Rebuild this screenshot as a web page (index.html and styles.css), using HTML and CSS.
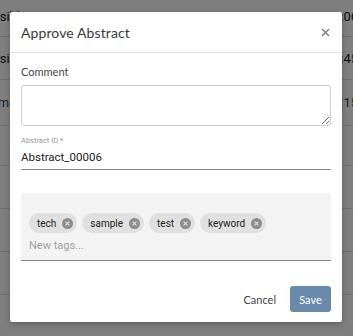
FILE: index.html
```html
<!DOCTYPE html>
<html>
<head>
<meta charset="utf-8">
<link rel="stylesheet" href="styles.css">
</head>
<body>
<div class="page">
  <div class="row r1"><span class="lt">Accessible</span><span class="rt">07/01/2024 11:06</span></div>
  <div class="row r2"><span class="lt">Accessible</span><span class="rt">07/01/2024 10:45</span></div>
  <div class="row r3"><span class="lt link">Minimal</span><span class="rt warn">07/01/2024 09:15</span></div>
  <div class="row r4"><span class="lt"></span><span class="rt"></span></div>
  <div class="row r5"><span class="lt"></span><span class="rt"></span></div>
  <div class="row r6"><span class="lt"></span><span class="rt"></span></div>
  <div class="row r7"><span class="lt"></span><span class="rt"></span></div>
</div>
<div class="overlay"></div>
<div class="modal">
  <div class="modal-header">
    <span class="title">Approve Abstract</span>
    <span class="close">
      <svg width="9" height="9" viewBox="0 0 9 9"><path d="M1 1L8 8M8 1L1 8" stroke="#777" stroke-width="1.3" fill="none"/></svg>
    </span>
  </div>
  <div class="modal-body">
    <label class="label">Comment</label>
    <textarea class="textarea"></textarea>
    <div class="field">
      <div class="field-label">Abstract ID *</div>
      <div class="field-value">Abstract_00006</div>
    </div>
    <div class="tags">
      <div class="chips">
        <span class="chip">tech<span class="chip-x"><svg width="11" height="11" viewBox="0 0 11 11"><circle cx="5.5" cy="5.5" r="5.5" fill="#8c8c8c"/><path d="M3.6 3.6L7.4 7.4M7.4 3.6L3.6 7.4" stroke="#e0e0e0" stroke-width="1.2"/></svg></span></span>
        <span class="chip">sample<span class="chip-x"><svg width="11" height="11" viewBox="0 0 11 11"><circle cx="5.5" cy="5.5" r="5.5" fill="#8c8c8c"/><path d="M3.6 3.6L7.4 7.4M7.4 3.6L3.6 7.4" stroke="#e0e0e0" stroke-width="1.2"/></svg></span></span>
        <span class="chip">test<span class="chip-x"><svg width="11" height="11" viewBox="0 0 11 11"><circle cx="5.5" cy="5.5" r="5.5" fill="#8c8c8c"/><path d="M3.6 3.6L7.4 7.4M7.4 3.6L3.6 7.4" stroke="#e0e0e0" stroke-width="1.2"/></svg></span></span>
        <span class="chip">keyword<span class="chip-x"><svg width="11" height="11" viewBox="0 0 11 11"><circle cx="5.5" cy="5.5" r="5.5" fill="#8c8c8c"/><path d="M3.6 3.6L7.4 7.4M7.4 3.6L3.6 7.4" stroke="#e0e0e0" stroke-width="1.2"/></svg></span></span>
      </div>
      <div class="new-tags">New tags...</div>
    </div>
  </div>
  <div class="modal-footer">
    <button class="btn-cancel">Cancel</button>
    <button class="btn-save">Save</button>
  </div>
</div>
</body>
</html>
```
FILE: styles.css
```css
* { box-sizing: border-box; }
html, body { margin: 0; padding: 0; }
body {
  width: 353px;
  height: 336px;
  overflow: hidden;
  background: #ffffff;
  font-family: "Lato", "Noto Sans", sans-serif;
  position: relative;
}
.page {
  display: flex;
  flex-direction: column;
}
.row {
  display: flex;
  justify-content: space-between;
  align-items: center;
  border-bottom: 1px solid #e0e0e0;
  font-family: "Roboto", sans-serif;
  font-size: 13px;
  color: #212121;
  white-space: nowrap;
  overflow: hidden;
}
.r1 { height: 37px; align-items: flex-start; }
.r1 .lt, .r1 .rt { margin-top: 9px; }
.r2 { height: 43px; }
.r3 { height: 46px; }
.r4 { height: 40px; }
.r5 { height: 43px; }
.r6 { height: 43px; }
.r7 { height: 43px; }
.lt { text-indent: -36px; }
.rt { margin-right: -5px; }
.link { color: #1a4c7a; text-indent: -27px; }
.warn { color: #5a3b00; }
.overlay {
  position: absolute;
  inset: 0;
  background: rgba(0, 0, 0, 0.5);
}
.modal {
  position: absolute;
  left: 10px;
  top: 12px;
  width: 332px;
  height: 310px;
  background: #ffffff;
  border-radius: 2px;
  box-shadow: 0 2px 6px rgba(0,0,0,0.25);
  display: flex;
  flex-direction: column;
}
.modal-header {
  height: 41px;
  display: flex;
  align-items: center;
  justify-content: space-between;
  padding: 0 11px 0 11px;
  border-bottom: 1px solid #e3e3e3;
}
.title {
  font-size: 14px;
  color: #3a3a3a;
  letter-spacing: 0.1px;
}
.close {
  display: flex;
  width: 10px;
  height: 10px;
  align-items: center;
  justify-content: center;
  margin-right: 1px;
}
.modal-body {
  padding: 12px 11px 0 11px;
  display: flex;
  flex-direction: column;
}
.label {
  font-size: 11px;
  color: #444444;
  line-height: 14px;
}
.textarea {
  margin-top: 6px;
  height: 41px;
  width: 310px;
  border: 1px solid #cfcfcf;
  border-radius: 3px;
  resize: vertical;
  font-family: inherit;
}
.field {
  margin-top: 10px;
  border-bottom: 1px solid #8a8a8a;
  width: 310px;
}
.field-label {
  font-family: "Roboto", sans-serif;
  font-size: 7.5px;
  color: #999999;
  line-height: 9px;
}
.field-value {
  margin-top: 5px;
  font-family: "Roboto", sans-serif;
  font-size: 11.5px;
  color: #222222;
  line-height: 15px;
  padding-bottom: 4px;
}
.tags {
  margin-top: 23px;
  width: 310px;
  height: 68px;
  background: #f3f3f3;
  border-radius: 3px 3px 0 0;
  border-bottom: 1px solid #8a8a8a;
  padding: 20px 8px 0 8px;
  font-family: "Roboto", sans-serif;
}
.chips {
  display: flex;
  gap: 5px;
}
.chip {
  display: inline-flex;
  align-items: center;
  height: 20px;
  padding: 0 4px 0 8px;
  border-radius: 10px;
  background: #e0e0e0;
  font-size: 10px;
  color: #222222;
}
.chip-x {
  display: inline-flex;
  margin-left: 6px;
}
.new-tags {
  margin-top: 6px;
  font-size: 11px;
  color: #a0a0a0;
  line-height: 14px;
}
.modal-footer {
  margin-top: auto;
  display: flex;
  justify-content: flex-end;
  align-items: center;
  padding: 0 11px 10px 11px;
  gap: 14px;
}
.btn-cancel {
  border: none;
  background: none;
  font-family: "Lato", sans-serif;
  font-size: 11px;
  color: #444444;
  padding: 0;
}
.btn-save {
  border: none;
  background: #6a8aab;
  color: #ffffff;
  font-family: "Lato", sans-serif;
  font-size: 11px;
  height: 26px;
  width: 41px;
  border-radius: 3px;
  padding: 0;
}
```
